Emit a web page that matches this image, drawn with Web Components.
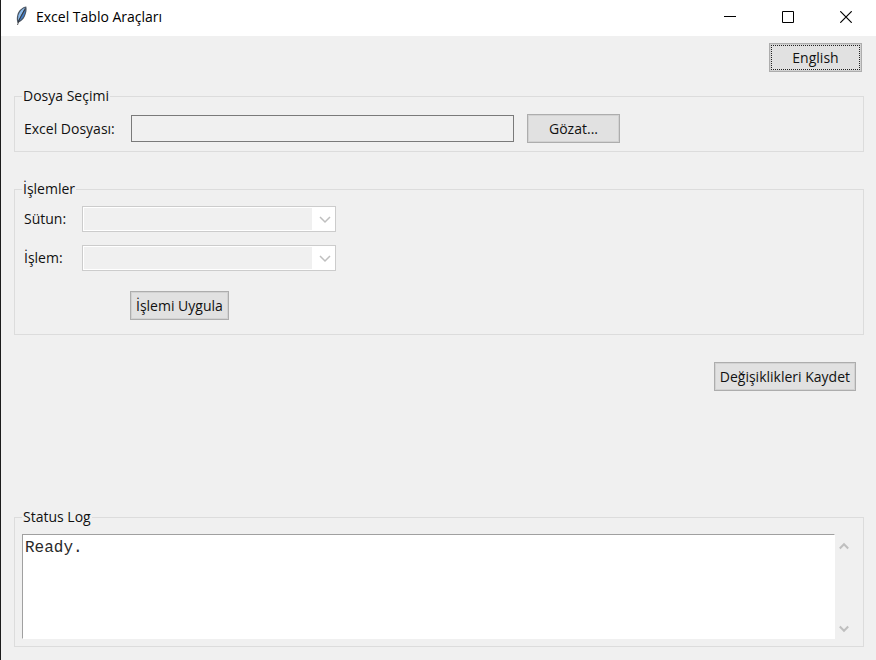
<!DOCTYPE html>
<html lang="tr">
<head>
<meta charset="utf-8">
<title>Excel Tablo Araçları</title>
<style>
  html, body { height: 100%; margin: 0; }
  body { background: #f0f0f0; }
</style>
</head>
<body>
<app-window></app-window>
<script>
const define = (name, html, setup) => {
  const tpl = document.createElement('template');
  tpl.innerHTML = html;
  customElements.define(name, class extends HTMLElement {
    constructor() {
      super();
      this.attachShadow({ mode: 'open' }).append(tpl.content.cloneNode(true));
    }
    connectedCallback() { if (setup) setup(this, this.shadowRoot); }
  });
};

define('feather-icon', `
  <style>:host { display: block; width: 16px; height: 20px; } svg { display: block; }</style>
  <svg width="16" height="20" viewBox="0 0 16 20" aria-hidden="true">
    <path d="M13.300.6C9.500 1 5.500 4.500 4.300 9c-.7 2.700-.6 5.500.2 8C7.500 16 10.400 13.500 11.800 10.500 13.500 7 14 3.500 13.300.6z" fill="#4a5563"/>
    <path d="M12 1.500C8.800 3 6.300 6 5.400 9.500L4.900 14.500C7.500 11 10 6 12 1.500z" fill="#8dbcec"/>
    <path d="M12.400 3.500C11 7 8.500 11 5.800 14.800 8.500 13.300 10.200 11.500 11 9.200 12 7 12.500 5.500 12.400 3.500z" fill="#3f7fd0"/>
    <path d="M11.800 3.500C9 8 6.500 12 4.500 19" fill="none" stroke="#2a2b2e" stroke-width=".8"/>
  </svg>`);

define('title-bar', `
  <style>
    :host { display: flex; align-items: center; height: 36px; box-sizing: border-box; padding: 0 1px 2px 12px; background: #fff; color: #000; }
    h1 { flex: 1; margin: 0 0 0 7px; font: 400 14px/20px "Open Sans", "Noto Sans", sans-serif; }
    feather-icon { margin-top: -2px; }
    button { width: 58px; height: 34px; padding: 0; border: 0; background: none; display: grid; place-items: center; }
    svg { display: block; fill: none; stroke: #000; }
  </style>
  <feather-icon></feather-icon>
  <h1><slot></slot></h1>
  <button aria-label="Küçült"><svg width="12" height="12"><path d="M0 5.500h12"/></svg></button>
  <button aria-label="Ekranı kapla"><svg width="12" height="12"><path d="M.5.5h11v11H.5z"/></svg></button>
  <button aria-label="Kapat"><svg width="12" height="12"><path d="M.3.3l11.400 11.400M11.700.3L.3 11.700" stroke-width="1.200"/></svg></button>`);

define('tk-button', `
  <style>
    :host { display: block; min-width: 93px; }
    button { display: block; position: relative; width: 100%; height: 29px; padding: 0 5px; border: 1px solid #adadad; outline: 1px solid #d2d2d2; outline-offset: -2px;
      background: #e1e1e1; color: #111; font: inherit; white-space: nowrap; }
    :host([focused]) button::after { content: ""; position: absolute; inset: 1px; border: 1px dotted #222; }
  </style>
  <button type="button"><slot></slot></button>`);

define('tk-group', `
  <style>
    :host { display: block; }
    fieldset { min-width: 0; margin: 0; border: 1px solid #dcdcdc; padding: 7px; }
    legend { padding: 0 1px; line-height: 20px; }
  </style>
  <fieldset><legend></legend><slot></slot></fieldset>`,
  (el, root) => { root.querySelector('legend').textContent = el.getAttribute('heading'); });

const fieldCss = `
    :host { display: flex; align-items: center; }
    label { flex: none; box-sizing: border-box; width: var(--label-width, 58px); line-height: 20px; }`;

define('path-field', `
  <style>${fieldCss}
    input { box-sizing: border-box; flex: 1; min-width: 0; height: 27px; padding: 0 4px; border: 1px solid #7a7a7a; background: #f0f0f0; font: inherit; }
  </style>
  <label for="path"><slot></slot></label><input id="path" type="text" readonly>`);

define('combo-field', `
  <style>${fieldCss}
    .box { position: relative; flex: 1; min-width: 0; }
    select { display: block; appearance: none; box-sizing: border-box; width: 100%; height: 26px; margin: 0; padding: 0 24px 0 4px;
      border: 1px solid #ccc; border-radius: 0; opacity: 1; font: inherit;
      background: #f0f0f0; box-shadow: inset 0 0 0 1px #fff, inset -23px 0 0 #fff; }
    svg { position: absolute; right: 5px; top: 9px; fill: none; stroke: #bfbfbf; stroke-width: 1.500; pointer-events: none; }
  </style>
  <label for="choice"><slot></slot></label>
  <span class="box"><select id="choice" disabled></select>
  <svg width="12" height="9" viewBox="0 0 12 9"><path d="M1 2l5 5 5-5"/></svg></span>`);

define('status-log', `
  <style>
    :host { display: flex; height: 105px; }
    textarea { box-sizing: border-box; flex: 1; min-width: 0; margin: 0; padding: 3px 2px; resize: none; overflow: hidden; outline: 0;
      border: 1px solid #fff; border-top-color: #a0a0a0; border-left-color: #a0a0a0; background: #fff; color: #2a2a2a;
      font: 16px/20px "Liberation Mono", "Courier New", monospace; }
    .bar { width: 21px; display: flex; flex-direction: column; justify-content: space-between; padding: 7px 0 5px; box-sizing: border-box; }
    button { display: block; height: 10px; width: 18px; padding: 0; border: 0; background: none; }
    svg { display: block; margin: auto; fill: none; stroke: #bfbfbf; stroke-width: 2; }
  </style>
  <textarea aria-label="Status Log" readonly></textarea>
  <div class="bar">
    <button aria-label="Yukarı"><svg width="10" height="10"><path d="M.8 7.500L5 3.200l4.200 4.300"/></svg></button>
    <button aria-label="Aşağı"><svg width="10" height="10"><path d="M.8 2.500L5 6.800l4.200-4.300"/></svg></button>
  </div>`,
  (el, root) => { root.querySelector('textarea').value = el.getAttribute('text'); });

define('app-window', `
  <style>
    :host { display: flex; flex-direction: column; min-height: 100%; box-sizing: border-box; border-left: 1px solid #1c1c1c;
      background: #f0f0f0; color: #111; font: 14px/20px "Open Sans", "Noto Sans", sans-serif; }
    main { flex: 1; display: flex; flex-direction: column; padding: 7px 12px 13px 13px; }
    .language { display: flex; justify-content: flex-end; margin: 0 2px 14px 0; }
    .file { display: flex; align-items: center; gap: 13px; padding: 1px 2px; --label-width: 107px; }
    path-field { width: 490px; }
    .operations { display: grid; gap: 13px; justify-items: start; padding: 0 2px 7px; }
    combo-field { width: 312px; }
    .apply { margin: 7px 0 0 106px; }
    .save { display: flex; justify-content: flex-end; margin: 0 8px 0 0; padding: 27px 0; }
    .log { margin-top: auto; }
    .operations-group { margin-top: 27px; }
  </style>
  <title-bar>Excel Tablo Araçları</title-bar>
  <main>
    <div class="language"><tk-button focused>English</tk-button></div>
    <tk-group heading="Dosya Seçimi">
      <div class="file"><path-field>Excel Dosyası:</path-field><tk-button>Gözat...</tk-button></div>
    </tk-group>
    <tk-group class="operations-group" heading="İşlemler">
      <div class="operations">
        <combo-field>Sütun:</combo-field>
        <combo-field>İşlem:</combo-field>
        <tk-button class="apply">İşlemi Uygula</tk-button>
      </div>
    </tk-group>
    <div class="save"><tk-button>Değişiklikleri Kaydet</tk-button></div>
    <tk-group class="log" heading="Status Log"><status-log text="Ready."></status-log></tk-group>
  </main>`);
</script>
</body>
</html>
